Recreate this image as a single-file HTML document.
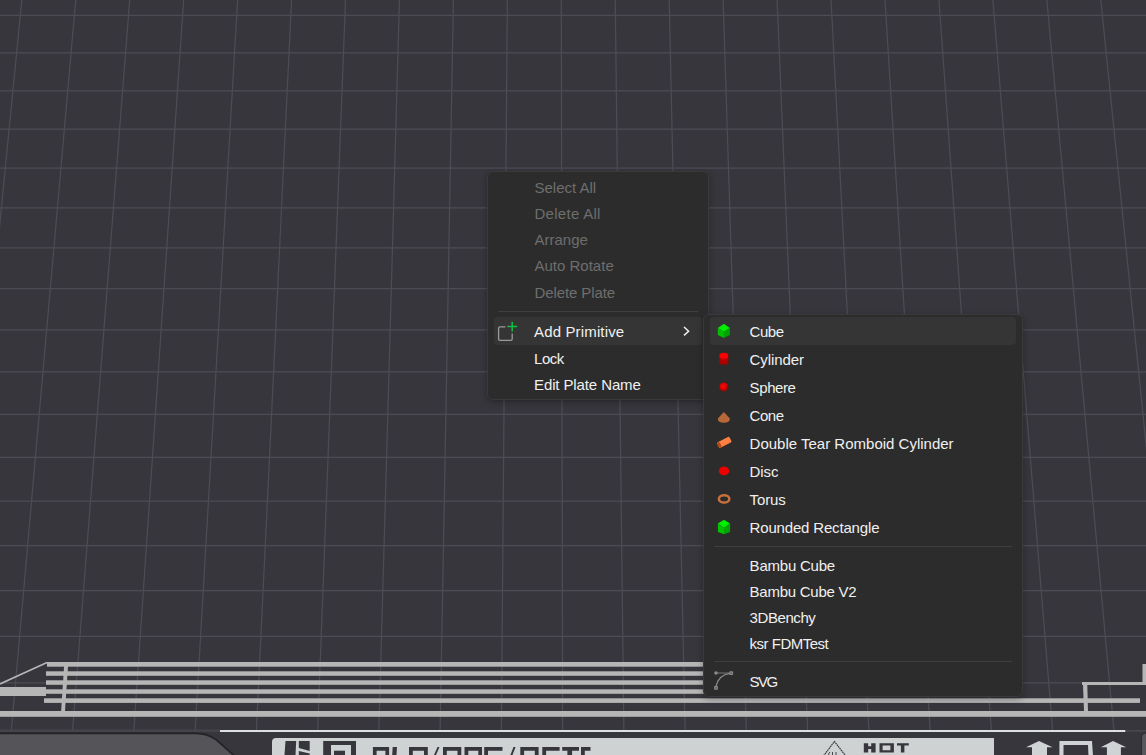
<!DOCTYPE html>
<html><head><meta charset="utf-8">
<style>
html,body{margin:0;padding:0;}
body{width:1146px;height:755px;overflow:hidden;position:relative;background:#36363c;font-family:"Liberation Sans",sans-serif;}
svg.bgsvg{position:absolute;left:0;top:0;}
.menu{position:absolute;background:#2c2c2c;border:1px solid #3a3a3a;border-radius:5px;box-sizing:border-box;border-radius:6px;box-shadow:0 2px 6px rgba(0,0,0,0.3);}
.t{position:absolute;font-size:15px;line-height:15px;white-space:nowrap;color:#f0f0f0;}
.dis{color:#6e6e6e;}
.sep{position:absolute;height:1px;background:#3f3f3f;}
.hl{position:absolute;background:#353535;border-radius:4px;}
</style></head><body>
<svg class="bgsvg" width="1146" height="755" viewBox="0 0 1146 755">
<g stroke="#4c4c55" stroke-width="1.25" fill="none">
<line x1="0" y1="15.40" x2="1146" y2="15.40"/>
<line x1="0" y1="52.82" x2="1146" y2="52.82"/>
<line x1="0" y1="90.76" x2="1146" y2="90.76"/>
<line x1="0" y1="129.23" x2="1146" y2="129.23"/>
<line x1="0" y1="168.23" x2="1146" y2="168.23"/>
<line x1="0" y1="207.79" x2="1146" y2="207.79"/>
<line x1="0" y1="247.91" x2="1146" y2="247.91"/>
<line x1="0" y1="288.60" x2="1146" y2="288.60"/>
<line x1="0" y1="329.88" x2="1146" y2="329.88"/>
<line x1="0" y1="371.76" x2="1146" y2="371.76"/>
<line x1="0" y1="414.26" x2="1146" y2="414.26"/>
<line x1="0" y1="457.37" x2="1146" y2="457.37"/>
<line x1="0" y1="501.13" x2="1146" y2="501.13"/>
<line x1="0" y1="545.55" x2="1146" y2="545.55"/>
<line x1="0" y1="590.63" x2="1146" y2="590.63"/>
<line x1="0" y1="636.40" x2="1146" y2="636.40"/>
<line x1="0" y1="682.87" x2="1146" y2="682.87"/>
<line x1="21.80" y1="0" x2="-49.88" y2="730"/>
<line x1="75.75" y1="0" x2="11.37" y2="730"/>
<line x1="129.70" y1="0" x2="72.62" y2="730"/>
<line x1="183.65" y1="0" x2="133.87" y2="730"/>
<line x1="237.60" y1="0" x2="195.12" y2="730"/>
<line x1="291.55" y1="0" x2="256.37" y2="730"/>
<line x1="345.50" y1="0" x2="317.62" y2="730"/>
<line x1="399.45" y1="0" x2="378.87" y2="730"/>
<line x1="453.40" y1="0" x2="440.12" y2="730"/>
<line x1="507.35" y1="0" x2="501.37" y2="730"/>
<line x1="561.30" y1="0" x2="562.62" y2="730"/>
<line x1="615.25" y1="0" x2="623.87" y2="730"/>
<line x1="669.20" y1="0" x2="685.12" y2="730"/>
<line x1="723.15" y1="0" x2="746.37" y2="730"/>
<line x1="777.10" y1="0" x2="807.62" y2="730"/>
<line x1="831.05" y1="0" x2="868.87" y2="730"/>
<line x1="885.00" y1="0" x2="930.12" y2="730"/>
<line x1="938.95" y1="0" x2="991.37" y2="730"/>
<line x1="992.90" y1="0" x2="1052.62" y2="730"/>
<line x1="1046.85" y1="0" x2="1113.87" y2="730"/>
<line x1="1100.80" y1="0" x2="1175.12" y2="730"/>
</g>

<g fill="#b6b6b6">
<rect x="47" y="662" width="953" height="4.7"/>
<rect x="46" y="671.3" width="954" height="4.5"/>
<rect x="46" y="680.3" width="954" height="4.5"/>
<rect x="0" y="687" width="46" height="9"/>
<rect x="45" y="689.3" width="955" height="4.5"/>
<rect x="44" y="698.3" width="1096" height="4.6"/>
<rect x="0" y="711" width="1146" height="5.8"/>
<polygon points="64.1,666 68,666 65,711 61.1,711"/>
<rect x="1082" y="682" width="64" height="3"/>
<polygon points="1083,685 1087.3,685 1088,711 1084,711"/>
<rect x="1142.5" y="664" width="4" height="20"/>
</g>
<line x1="0" y1="684" x2="47" y2="662.5" stroke="#b6b6b6" stroke-width="1.6"/>
<rect x="0" y="729.6" width="220" height="2.1" fill="#46464c"/>
<rect x="220" y="730" width="905.5" height="2" fill="#dde0e0"/>
<rect x="1125.5" y="730" width="21" height="1.6" fill="#48484e"/>
<path d="M-2,733.3 L196,733.3 Q207,733.3 216,739.5 L235,756.5 L-2,757 Z" fill="#555459" stroke="#242427" stroke-width="1.7"/>
<path d="M1141.5,757 L1141.5,738 Q1141.5,733 1147,733 L1147,757 Z" fill="#58575c" stroke="#2a2a2e" stroke-width="1"/>
<path d="M272,755 L272,742 Q272,738 276,738 L994,738 L994,755 Z" fill="#cfd2d2"/>
<g fill="#36363c">
<!-- bambu logo -->
<polygon points="285.5,741 296.2,741 295.5,755 284.5,755"/>
<polygon points="298.8,741 309.7,741 309.7,751 298.8,748"/>
<polygon points="298.8,751 309.7,753.5 309.7,755 298.8,755"/>
<!-- square glyph -->
<path d="M323.2,741 H356 V755 H323.2 Z M331,745 V755 H351 V745 Z" fill-rule="evenodd"/>
<rect x="334" y="750.7" width="11" height="5"/>
<!-- DLB/BBE/DETG -->
<path d="M372.9,747 H389.1 V755 H385.4 V750.7 H376.6 V755 H372.9 Z"/>
<polygon points="392.7,747 397,747 396.5,755 392.2,755"/>
<path d="M409,747 H427.8 V755 H424 V750.7 H412.8 V755 H409 Z"/>
<polygon points="437.5,747 439.5,747 436,755 434,755"/>
<path d="M443,747 H461.3 V755 H457.5 V750.7 H446.8 V755 H443 Z"/>
<path d="M464.5,747 H482 V755 H478.3 V750.7 H468.3 V755 H464.5 Z"/>
<path d="M484.2,747 H502.5 V750.7 H488 V755 H484.2 Z"/>
<polygon points="513.5,747 515.6,747 512.5,755 510.4,755"/>
<path d="M520.3,747 H538.6 V755 H534.8 V750.7 H524.1 V755 H520.3 Z"/>
<path d="M542.3,747 H559.6 V750.7 H546.1 V755 H542.3 Z"/>
<path d="M562.2,747 H579 V750.7 H572.1 V755 H567.4 V750.7 H562.2 Z"/>
<path d="M581,747 H590.5 V750.7 H584.8 V755 H581 Z"/>
<!-- HOT -->
<path d="M863.8,743.2 H868.2 V746.3 H871.2 V743.2 H875.6 V752.4 H871.2 V748.9 H868.2 V752.4 H863.8 Z"/>
<path d="M879.5,743.2 H893.9 V752.4 H879.5 Z M882.6,745.4 V750.2 H890.4 V745.4 Z" fill-rule="evenodd"/>
<path d="M897,743.2 H908.8 V745.4 H904.4 V752.4 H900.9 V745.4 H897 Z"/>
</g>
<path d="M823.5,756 L834.4,741.6 L845.9,756" fill="none" stroke="#36363c" stroke-width="1.2" stroke-dasharray="1.6 0.6"/><path d="M828.5,755 Q829,752.5 830,752 M832.5,755 V752 M836,755 V752" stroke="#36363c" stroke-width="0.9" fill="none"/>
<g fill="#d0d3d3">
<polygon points="1039,741 1052.6,747.3 1047,747.3 1047,756 1032,756 1032,747.3 1026,747.3"/>
<polygon points="1113,741 1126.2,747.3 1120.9,747.3 1120.9,756 1106.9,756 1106.9,747.3 1100.8,747.3"/>
<path d="M1059.4,741 H1092 L1093,756 H1059.4 Z M1063.5,745 V756 H1088.5 L1088,745 Z" fill-rule="evenodd"/>
</g>

</svg>
<div class="menu" style="left:487px;top:171px;width:222px;height:229px"></div>
<div class="t dis" style="left:534.5px;top:180.28px;letter-spacing:0px">Select All</div>
<div class="t dis" style="left:534.5px;top:206.28px;letter-spacing:0.28px">Delete All</div>
<div class="t dis" style="left:534.5px;top:232.28px;letter-spacing:0px">Arrange</div>
<div class="t dis" style="left:534.5px;top:258.28px;letter-spacing:0px">Auto Rotate</div>
<div class="t dis" style="left:534.5px;top:285.28px;letter-spacing:-0.1px">Delete Plate</div>
<div class="sep" style="left:498px;top:311px;width:200px"></div>
<div class="hl" style="left:494px;top:317px;width:208px;height:28px"></div>
<div class="t " style="left:534px;top:324.28px;letter-spacing:0.15px">Add Primitive</div>
<div class="t " style="left:534px;top:351.28px;letter-spacing:-0.45px">Lock</div>
<div class="t " style="left:534px;top:377.28px;letter-spacing:-0.11px">Edit Plate Name</div>
<svg style="position:absolute;left:490px;top:315px" width="40" height="32" viewBox="490 315 40 32">
<path d="M505.4,326.8 L500,326.8 Q498.6,326.8 498.6,328.2 L498.6,339 Q498.6,340.4 500,340.4 L510.8,340.4 Q512.2,340.4 512.2,339 L512.2,333.5" fill="none" stroke="#9a9a9a" stroke-width="1.3"/>
<path d="M512.2,321.7 V331.4 M507.3,326.6 H517.2" stroke="#10c040" stroke-width="1.5"/>
</svg>
<svg style="position:absolute;left:678px;top:322px" width="16" height="18" viewBox="678 322 16 18">
<path d="M684,327 L688.6,331.2 L684,335.4" fill="none" stroke="#f0f0f0" stroke-width="1.5"/>
</svg>
<div class="menu" style="left:703px;top:314px;width:320px;height:383px"></div>
<div class="hl" style="left:710px;top:317px;width:306px;height:28px"></div>
<div class="t " style="left:749.6px;top:324.28px;letter-spacing:-0.45px">Cube</div>
<div class="t " style="left:749.6px;top:352.28px;letter-spacing:-0.1px">Cylinder</div>
<div class="t " style="left:749.6px;top:380.28px;letter-spacing:-0.4px">Sphere</div>
<div class="t " style="left:749.6px;top:408.28px;letter-spacing:-0.45px">Cone</div>
<div class="t " style="left:749.6px;top:436.28px;letter-spacing:0px">Double Tear Romboid Cylinder</div>
<div class="t " style="left:749.6px;top:464.28px;letter-spacing:-0.1px">Disc</div>
<div class="t " style="left:749.6px;top:492.28px;letter-spacing:-0.15px">Torus</div>
<div class="t " style="left:749.6px;top:520.28px;letter-spacing:-0.17px">Rounded Rectangle</div>
<div class="sep" style="left:714px;top:546px;width:298px"></div>
<div class="t " style="left:749.6px;top:558.08px;letter-spacing:-0.22px">Bambu Cube</div>
<div class="t " style="left:749.6px;top:584.08px;letter-spacing:-0.25px">Bambu Cube V2</div>
<div class="t " style="left:749.6px;top:610.08px;letter-spacing:-0.43px">3DBenchy</div>
<div class="t " style="left:749.6px;top:636.08px;letter-spacing:-0.5px">ksr FDMTest</div>
<div class="sep" style="left:714px;top:661px;width:298px"></div>
<div class="t " style="left:749.6px;top:674.28px;letter-spacing:-1.6px">SVG</div>
<svg style="position:absolute;left:705px;top:315px" width="40" height="380" viewBox="705 315 40 380">
<g>
<polygon points="723.9,323.8 729.9,327.9 723.9,331.8 717.8,327.9" fill="#00ee00"/>
<polygon points="717.8,327.9 723.9,331.8 723.9,338.1 717.8,334.9" fill="#00c000"/>
<polygon points="729.9,327.9 723.9,331.8 723.9,338.1 729.9,334.9" fill="#00a400"/>
</g>
<g>
<rect x="719.4" y="355.8" width="8.9" height="7" fill="#b80000"/>
<ellipse cx="723.85" cy="362.6" rx="4.45" ry="2.2" fill="#a80000"/>
<ellipse cx="723.85" cy="355.8" rx="4.45" ry="3" fill="#ff0000"/>
</g>
<defs>
<radialGradient id="sph" cx="0.42" cy="0.42" r="0.62">
<stop offset="0" stop-color="#f41010"/><stop offset="0.55" stop-color="#d80000"/><stop offset="1" stop-color="#900000"/>
</radialGradient>
</defs>
<circle cx="723.85" cy="386.9" r="4.5" fill="url(#sph)"/>
<path d="M723.9,412 L729.9,418.4 Q729.9,422.8 723.9,422.8 Q717.8,422.8 717.8,418.4 Z" fill="#b86838"/>
<g transform="rotate(-27 724.2 442.3)">
<rect x="717.2" y="439.2" width="14" height="6.2" rx="1.2" fill="#ff8040"/>
<ellipse cx="718.6" cy="442.3" rx="1.6" ry="3.1" fill="#b04818"/>
</g>
<ellipse cx="724" cy="470.9" rx="5.2" ry="4.3" fill="#ee0000"/>
<ellipse cx="724.1" cy="498.9" rx="5.25" ry="3.7" fill="none" stroke="#c8703c" stroke-width="2.5"/>
<g>
<polygon points="724,519.7 730.1,523.5 724,528 717.9,523.5" fill="#00ee00"/>
<polygon points="717.9,523.5 724,528 724,534.2 717.9,532.1" fill="#00c000"/>
<polygon points="730.1,523.5 724,528 724,534.2 730.1,532.1" fill="#00a400"/>
</g>
<g stroke="#8a8a8a" fill="none">
<line x1="716" y1="673" x2="729.5" y2="673" stroke-width="0.8"/>
<path d="M730,673.4 Q718.5,675 716,686.5" stroke-width="1.3"/>
</g>
<rect x="729.3" y="671.3" width="3.8" height="3.8" rx="0.8" fill="#8a8a8a"/>
<rect x="714.1" y="686" width="3.8" height="3.8" rx="0.8" fill="#8a8a8a"/>
<rect x="730.5" y="672.5" width="1.4" height="1.4" fill="#5a5a5a"/>
<rect x="715.3" y="687.2" width="1.4" height="1.4" fill="#5a5a5a"/>
<circle cx="716" cy="673" r="1.8" fill="#8a8a8a"/>
</svg>
</body></html>
